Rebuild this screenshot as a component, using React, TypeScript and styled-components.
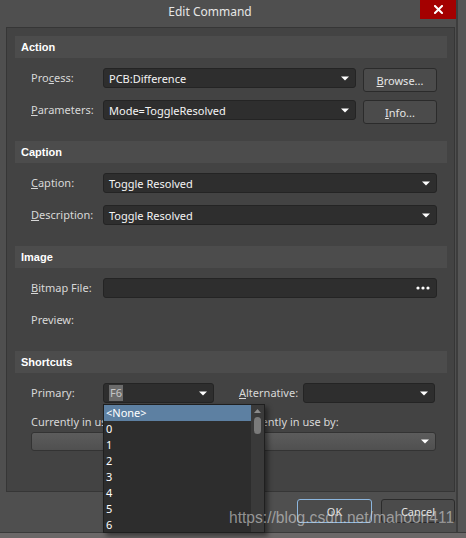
import React from "react";
import styled, { createGlobalStyle } from "styled-components";

const GlobalStyle = createGlobalStyle`
  html, body {
    margin: 0;
    padding: 0;
    background: #4f4f4f;
  }
  body {
    font-family: "Noto Sans", "Open Sans", sans-serif;
    font-size: 11px;
  }
  * {
    box-sizing: border-box;
  }
`;

// Frame of the screenshot
const Screen = styled.div`
  position: relative;
  width: 466px;
  height: 538px;
  display: flex;
  flex-direction: column;
  overflow: hidden;
  background: #6b6868;
`;

const Desktop = styled.div`
  display: flex;
  height: 532px;
  flex-shrink: 0;
`;

const BottomEdge = styled.div`
  flex: 1;
  background: #6b6868;
  border-top: 1px solid #3a3a3a;
`;

const RightEdge = styled.div`
  flex: 1;
  background: #555555;
  border-left: 2px solid #3d3d3d;
`;

const Window = styled.div`
  width: 456px;
  display: flex;
  flex-direction: column;
  background: #4f4f4f;
`;

// Title bar
const TitleBar = styled.div`
  height: 27px;
  display: flex;
  align-items: flex-start;
  flex-shrink: 0;
`;

const Title = styled.div`
  flex: 1;
  text-align: center;
  line-height: 24px;
  font-size: 12px;
  color: #e6e6e6;
`;

const CloseButton = styled.div`
  width: 36px;
  height: 19px;
  background: #a40000;
  display: flex;
  align-items: center;
  justify-content: center;
`;

// Main panel
const Panel = styled.div`
  margin-left: 6px;
  width: 449px;
  height: 465px;
  flex-shrink: 0;
  background: #434343;
  border: 1px solid #363636;
  padding: 8px 7px 0 8px;
`;

const SectionHeader = styled.div`
  height: 22px;
  line-height: 22px;
  padding-left: 6px;
  background: #4c4c4c;
  color: #ffffff;
  font-family: "Liberation Sans", Arial, sans-serif;
  font-weight: bold;
  font-size: 11px;
`;

const SectionBody = styled.div`
  display: flex;
  flex-direction: column;
  gap: 12px;
  padding: 10px 10px 21px 16px;
`;

const Row = styled.div`
  display: flex;
  align-items: flex-start;
  height: 20px;
`;

const Label = styled.div<{ $width?: number; $gap?: number }>`
  width: ${(p) => (p.$width ? `${p.$width}px` : "72px")};
  margin-left: ${(p) => (p.$gap ? `${p.$gap}px` : "0")};
  flex-shrink: 0;
  line-height: 20px;
  color: #d8d8d8;
  white-space: nowrap;

  u {
    text-underline-offset: 1px;
  }
`;

const Combo = styled.div<{ $width?: number }>`
  position: relative;
  ${(p) => (p.$width ? `width: ${p.$width}px; flex-shrink: 0;` : "flex: 1;")}
  height: 20px;
  background: #2e2e2e;
  border: 1px solid #242424;
  border-radius: 3px;
  padding: 0 6px 0 5px;
  display: flex;
  align-items: center;
  justify-content: space-between;
  color: #f4f4f4;
  white-space: nowrap;
`;

const Selected = styled.span`
  background: #6b6b6b;
  color: #c6c6c6;
  line-height: 16px;
  padding: 0 1px;
`;

const Button = styled.div<{ $focused?: boolean; $width?: number }>`
  width: ${(p) => (p.$width ? `${p.$width}px` : "74px")};
  height: 24px;
  flex-shrink: 0;
  margin-left: ${(p) => (p.$width ? "0" : "7px")};
  background: #4b4b4b;
  border: 1px solid ${(p) => (p.$focused ? "#8cb6de" : "#2b2b2b")};
  border-radius: 3px;
  color: #e6e6e6;
  display: flex;
  align-items: center;
  justify-content: center;

  u {
    text-underline-offset: 1px;
  }
`;

// Shortcuts: "Currently in use by"
const UsageGrid = styled.div`
  display: grid;
  grid-template-columns: 183px 197px;
  column-gap: 25px;
  margin-top: -1px;
`;

const UsageColumn = styled.div`
  display: flex;
  flex-direction: column;
  gap: 2px;
`;

const UsageLabel = styled.div`
  line-height: 16px;
  color: #d8d8d8;
`;

const DisabledCombo = styled.div`
  height: 19px;
  border: 1px solid #333333;
  border-radius: 3px;
  background: linear-gradient(#5c5c5c, #505050);
  display: flex;
  align-items: center;
  justify-content: flex-end;
  padding-right: 6px;
`;

// Dropdown list open under "Primary"
const DropList = styled.div`
  position: absolute;
  left: -1px;
  top: 20px;
  width: 162px;
  height: 129px;
  background: #2d2d2d;
  border: 1px solid #1f1f1f;
  box-shadow: 3px 3px 5px rgba(0, 0, 0, 0.45);
  display: flex;
  z-index: 5;
`;

const Items = styled.div`
  flex: 1;
  display: flex;
  flex-direction: column;
`;

const Item = styled.div<{ $active?: boolean }>`
  height: 16px;
  line-height: 16px;
  padding-left: 2px;
  color: #ffffff;
  background: ${(p) => (p.$active ? "#5d80a2" : "transparent")};
`;

const ScrollBar = styled.div`
  width: 13px;
  background: #3a3a3a;
  display: flex;
  flex-direction: column;
  align-items: center;
  padding-top: 4px;
  gap: 4px;
`;

const Thumb = styled.div`
  width: 7px;
  height: 17px;
  border-radius: 4px;
  background: #7a7a7a;
`;

// Footer
const Footer = styled.div`
  display: flex;
  justify-content: flex-end;
  gap: 9px;
  padding: 7px 1px 0 0;
`;

const Watermark = styled.div`
  position: absolute;
  left: 229px;
  top: 510px;
  z-index: 10;
  font-family: "Liberation Sans", Arial, sans-serif;
  font-size: 15.6px;
  line-height: 1;
  color: rgba(215, 215, 215, 0.6);
  white-space: nowrap;
  pointer-events: none;
`;

const Arrow = ({ color = "#ffffff" }: { color?: string }) => (
  <svg width="8" height="5" viewBox="0 0 8 5">
    <polygon points="0,0.5 8,0.5 4,4.5" fill={color} />
  </svg>
);

const Dots = () => (
  <svg width="14" height="4" viewBox="0 0 14 4">
    <circle cx="2" cy="2" r="1.6" fill="#ffffff" />
    <circle cx="7" cy="2" r="1.6" fill="#ffffff" />
    <circle cx="12" cy="2" r="1.6" fill="#ffffff" />
  </svg>
);

const CloseIcon = () => (
  <svg width="9" height="9" viewBox="0 0 9 9">
    <path d="M1 1 L8 8 M8 1 L1 8" stroke="#ffffff" strokeWidth="2" strokeLinecap="square" />
  </svg>
);

const UpArrow = () => (
  <svg width="7" height="4" viewBox="0 0 7 4">
    <polygon points="0,4 7,4 3.5,0" fill="#8c8c8c" />
  </svg>
);

const keys = ["0", "1", "2", "3", "4", "5", "6"];

const Section: React.FC<{ title: string; children: React.ReactNode }> = ({ title, children }) => (
  <>
    <SectionHeader>{title}</SectionHeader>
    <SectionBody>{children}</SectionBody>
  </>
);

export default function App() {
  return (
    <Screen>
      <GlobalStyle />
      <Desktop>
        <Window>
          <TitleBar>
            <Title>Edit Command</Title>
            <CloseButton>
              <CloseIcon />
            </CloseButton>
          </TitleBar>

          <Panel>
            <Section title="Action">
              <Row>
                <Label>
                  Pro<u>c</u>ess:
                </Label>
                <Combo $width={253}>
                  PCB:Difference
                  <Arrow />
                </Combo>
                <Button>
                  <span>
                    <u>B</u>rowse...
                  </span>
                </Button>
              </Row>
              <Row>
                <Label>
                  <u>P</u>arameters:
                </Label>
                <Combo $width={253}>
                  Mode=ToggleResolved
                  <Arrow />
                </Combo>
                <Button>
                  <span>
                    <u>I</u>nfo...
                  </span>
                </Button>
              </Row>
            </Section>

            <Section title="Caption">
              <Row>
                <Label>
                  <u>C</u>aption:
                </Label>
                <Combo>
                  Toggle Resolved
                  <Arrow />
                </Combo>
              </Row>
              <Row>
                <Label>
                  <u>D</u>escription:
                </Label>
                <Combo>
                  Toggle Resolved
                  <Arrow />
                </Combo>
              </Row>
            </Section>

            <Section title="Image">
              <Row>
                <Label>
                  <u>B</u>itmap File:
                </Label>
                <Combo>
                  <span />
                  <Dots />
                </Combo>
              </Row>
              <Row>
                <Label>Preview:</Label>
              </Row>
            </Section>

            <Section title="Shortcuts">
              <Row>
                <Label>Primary:</Label>
                <Combo $width={111}>
                  <Selected>F6</Selected>
                  <Arrow />
                  <DropList>
                    <Items>
                      <Item $active>&lt;None&gt;</Item>
                      {keys.map((k) => (
                        <Item key={k}>{k}</Item>
                      ))}
                    </Items>
                    <ScrollBar>
                      <UpArrow />
                      <Thumb />
                    </ScrollBar>
                  </DropList>
                </Combo>
                <Label $width={64} $gap={25}>
                  <u>A</u>lternative:
                </Label>
                <Combo $width={132}>
                  <span />
                  <Arrow />
                </Combo>
              </Row>
              <UsageGrid>
                <UsageColumn>
                  <UsageLabel>Currently in use by:</UsageLabel>
                  <DisabledCombo />
                </UsageColumn>
                <UsageColumn>
                  <UsageLabel>Currently in use by:</UsageLabel>
                  <DisabledCombo>
                    <Arrow />
                  </DisabledCombo>
                </UsageColumn>
              </UsageGrid>
            </Section>
          </Panel>

          <Footer>
            <Button $focused $width={75}>
              OK
            </Button>
            <Button $width={74}>Cancel</Button>
          </Footer>
        </Window>
        <RightEdge />
      </Desktop>
      <BottomEdge />
      <Watermark>https://blog.csdn.net/mahoon411</Watermark>
    </Screen>
  );
}
